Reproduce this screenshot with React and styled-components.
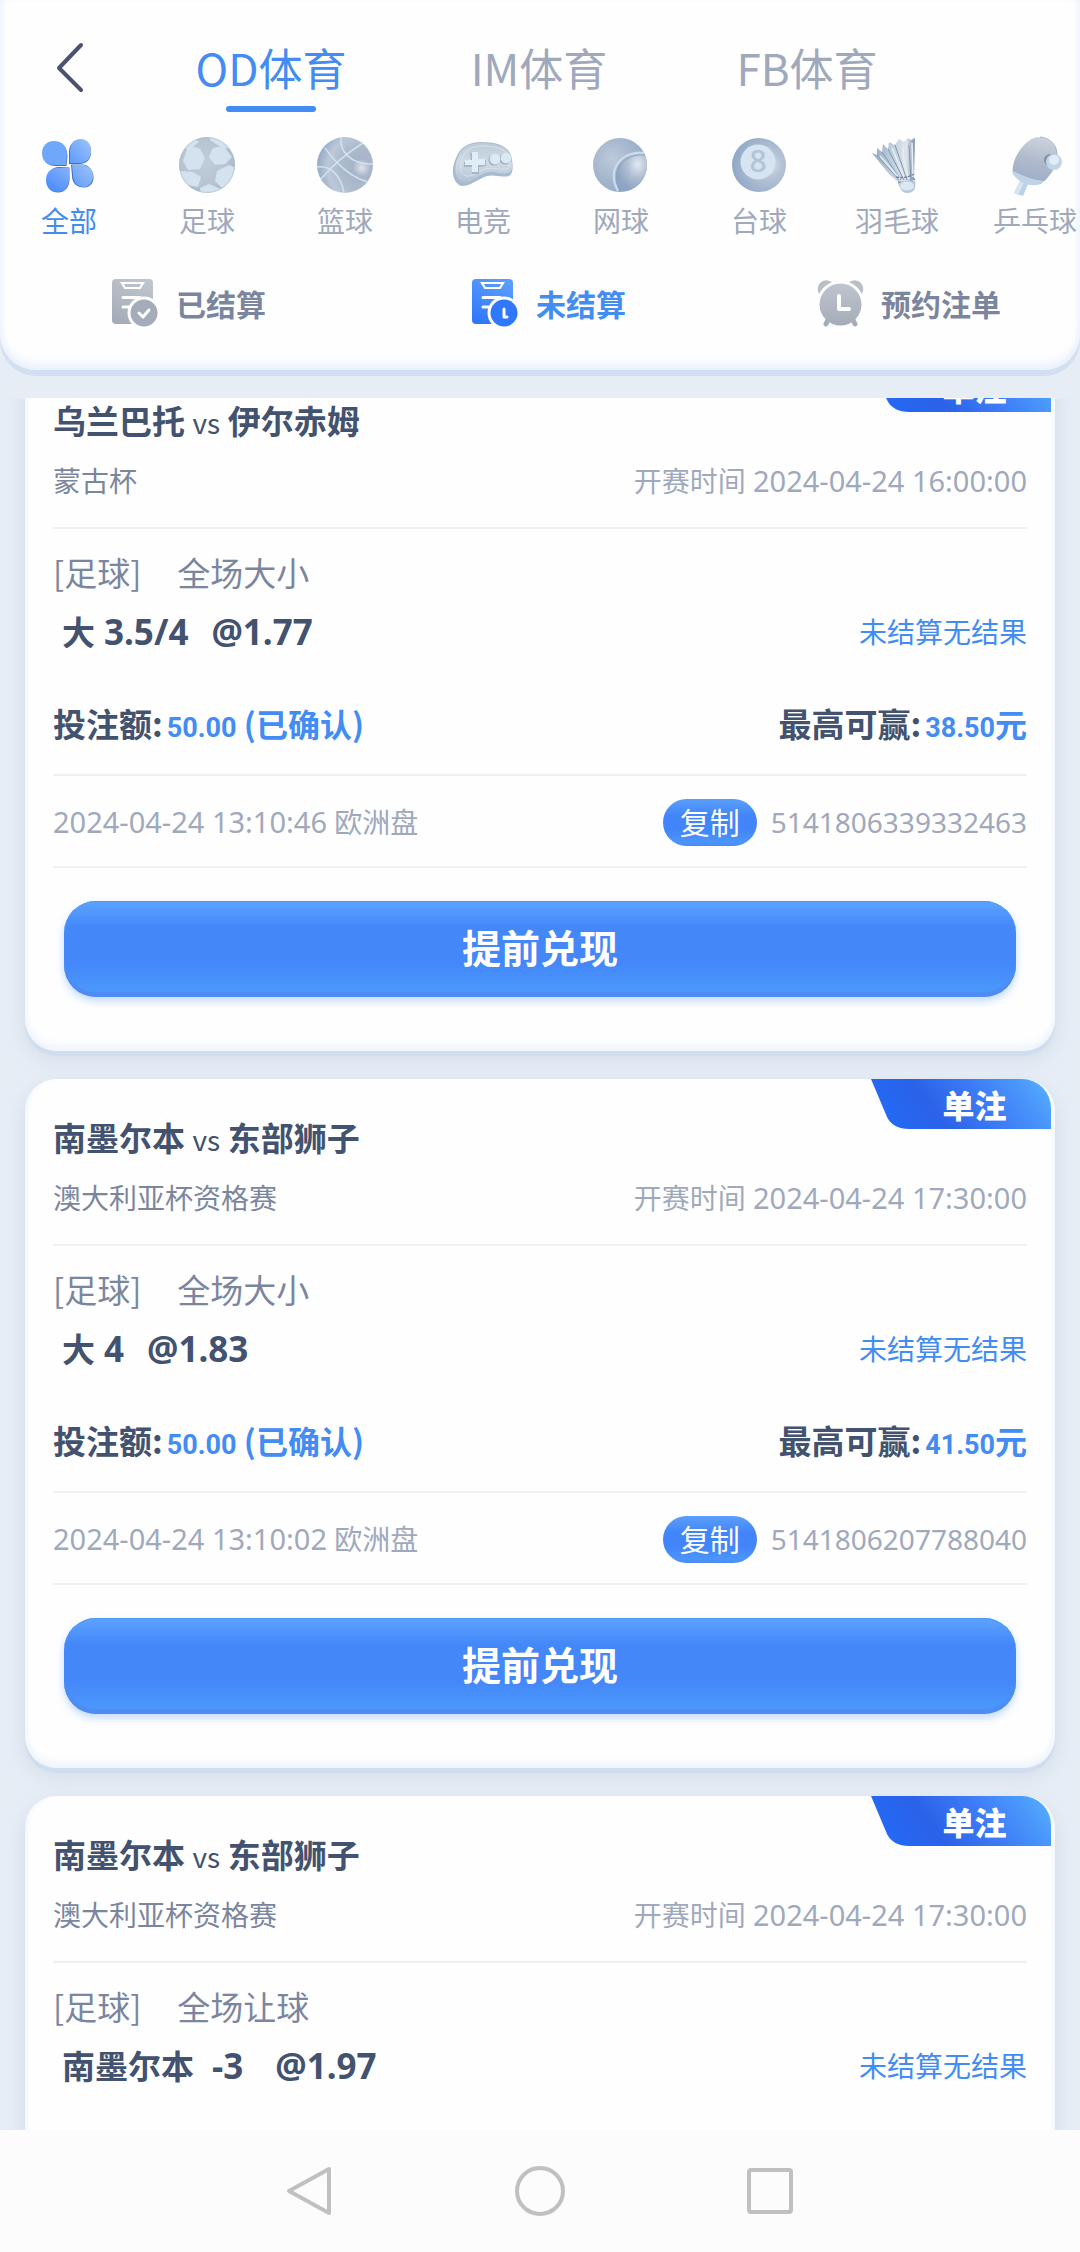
import React, {useState} from 'react';
import styled, {createGlobalStyle, css} from 'styled-components';

const GlobalStyle = createGlobalStyle`
	* {
		box-sizing: border-box;
	}
	body {
		margin: 0;
		background: #e6edf5;
		color: #42526f;
		font-family: "Noto Sans", "Noto Sans CJK SC", sans-serif;
	}
	button {
		border: 0;
		padding: 0;
		background: none;
		color: inherit;
		font: inherit;
		cursor: pointer;
	}
	h2, p {
		margin: 0;
	}
`

const Page = styled.div`
	display: flex;
	flex-direction: column;
	height: 100vh;
`

const Header = styled.header`
	position: relative;
	flex: none;
	padding: 34px 0 43px;
	background: #fefefe;
	border-radius: 0 0 36px 36px;
	box-shadow: 0 6px 0 #d1dff0, inset 0 -10px 14px -6px #e4edfb, inset 5px 0 6px -3px #edf3fc, inset -5px 0 6px -3px #edf3fc;
	font-family: "Noto Sans CJK SC", sans-serif;
`

const TopBar = styled.div`
	display: flex;
	align-items: flex-start;
	padding-right: 139px;
`

const BackButton = styled.button`
	flex: none;
	width: 137px;
	height: 66px;
	padding-left: 53px;
	text-align: left;

	svg {
		display: block;
	}
`

const VenueTabs = styled.nav`
	display: grid;
	flex: 1;
	grid-template-columns: repeat(3, 1fr);
`

const VenueTab = styled.button`
	display: flex;
	flex-direction: column;
	align-items: center;
	gap: 6px;
	color: ${props => props.$active ? '#438cf3' : '#a0a9bb'};
	font-size: 44px;
	line-height: 66px;

	&::after {
		content: '';
		width: 90px;
		height: 6px;
		border-radius: 3px;
		background: ${props => props.$active ? '#438cf3' : 'transparent'};
	}
`

const Sports = styled.nav`
	display: flex;
	margin-top: 21px;
	overflow: hidden;
`

const SportButton = styled.button`
	display: flex;
	flex: 0 0 138px;
	flex-direction: column;
	align-items: center;
	gap: 2px;
	color: ${props => props.$active ? '#438cf3' : '#a0a9bb'};
	font-size: 28px;
	line-height: 42px;
	white-space: nowrap;
`

const StatusTabs = styled.nav`
	display: grid;
	grid-template-columns: repeat(3, 1fr);
	margin-top: 38px;
`

const StatusTab = styled.button`
	display: flex;
	align-items: center;
	justify-content: center;
	gap: 17px;
	height: 48px;
	padding-left: 18px;
	color: ${props => props.$active ? '#438cf3' : '#7b869e'};
	font-size: 30px;
	font-weight: 700;
	line-height: 44px;
`

const BetList = styled.main`
	flex: 1;
	min-height: 0;
	margin-top: 28px;
	padding: 0 25px;
	overflow: hidden;
`

/* the list is scrolled a little way into the first card */
const Scrolled = styled.div`
	display: grid;
	gap: 28px;
	margin-top: -36px;
`

const Card = styled.article`
	position: relative;
	min-height: 688px;
	padding: 35px 28px 54px;
	border-radius: 32px;
	background: #fefefe;
	box-shadow: 0 5px 0 #cfddef, 0 8px 20px rgba(140, 160, 195, 0.22), inset 0 -10px 12px -6px #ebf2fc, inset 6px 0 6px -4px #f0f6fe, inset -6px 0 6px -4px #f0f6fe;
`

const Badge = styled.span`
	position: absolute;
	top: 0;
	right: 4px;
	width: 180px;
	height: 50px;
	padding-left: 27px;
	color: #ffffff;
	font: 700 32px/50px "Noto Sans CJK SC", sans-serif;
	text-align: center;

	svg {
		position: absolute;
		top: 0;
		left: 0;
		z-index: 0;
	}
	b {
		position: relative;
	}
`

const line = css`
	border-bottom: 2px solid #eef0f3;
`

const Teams = styled.h2`
	height: 46px;
	font: 700 33px/46px "Noto Sans CJK SC", sans-serif;

	span {
		font-size: 28px;
		font-weight: 400;
	}
`

const Row = styled.div`
	display: flex;
	align-items: center;
	justify-content: space-between;
`

const MatchRow = styled(Row)`
	${line}
	padding: 18px 0 26px;
	font-size: 28px;
	line-height: 40px;
`

const League = styled.span`
	color: #7b869e;
`

const Muted = styled.span`
	color: #a0a9bb;
`

const Time = styled.time`
	font-size: 29px;
`

const Market = styled.p`
	display: flex;
	gap: 36px;
	margin-top: 20px;
	color: #7b869e;
	font: 400 33px/46px "Noto Sans CJK SC", sans-serif;
`

const Selection = styled(Row)`
	height: 46px;
	margin-top: 14px;
	padding-left: 9px;
`

const Pick = styled.strong`
	display: flex;
	align-items: baseline;
	gap: ${props => props.$wide ? '18px' : '9px'};
	font-size: 33px;
	line-height: 46px;
`

const Figure = styled.span`
	font-size: 35px;

	& + & {
		margin-left: ${props => props.$wide ? '14px' : '26px'};
	}
`

const Result = styled.span`
	color: #438cf3;
	font-size: 28px;
	line-height: 40px;
`

const Amounts = styled(Row)`
	${line}
	height: 74px;
	margin-top: 47px;
	padding-bottom: 26px;
	font: 700 33px/46px "Noto Sans CJK SC", sans-serif;
`

const Money = styled.span`
	margin-left: 4px;
	color: #438cf3;
	font-size: 32px;
`

const Digits = styled.span`
	font-family: Roboto, sans-serif;
	font-size: 27px;
`

const OrderRow = styled(Row)`
	${line}
	padding: 22px 0 20px;
	color: #a0a9bb;
	font-size: 28px;
	line-height: 47px;
`

const OrderNumber = styled.span`
	display: flex;
	align-items: center;
	gap: 14px;
`

const CopyButton = styled.button`
	width: 94px;
	height: 47px;
	border-radius: 24px;
	background: linear-gradient(#5b9ffb, #4285fa 35%, #4285fa 65%, #4b95fb 92%, #4b8af2);
	color: #ffffff;
	font-size: 30px;
	line-height: 47px;
`

const CashOutButton = styled.button`
	display: block;
	width: calc(100% - 22px);
	height: 96px;
	margin: 33px 11px 0;
	padding-bottom: 6px;
	border-radius: 32px;
	background: linear-gradient(#5ca3fe, #4487f9 28%, #4487f9 65%, #4b9afc 96%);
	box-shadow: inset 0 -5px 1px #4e8cf4, inset 0 1px 0 #509bf0, 0 4px 9px rgba(80, 150, 255, 0.35);
	color: #ffffff;
	font: 700 39px/60px "Noto Sans CJK SC", sans-serif;
`

const SystemNav = styled.nav`
	position: relative;
	display: flex;
	flex: none;
	align-items: center;
	justify-content: center;
	gap: 178px;
	height: 122px;
	background: #fcfcfc;

	button {
		height: 52px;
	}
`

const AllIcon = () => (
    <svg width="64" height="64" viewBox="0 0 64 64" aria-hidden="true">
        <defs>
            <linearGradient id="petal" x1="1" y1="0" x2="0" y2="1">
                <stop offset="0" stopColor="#9fc3fa"/>
                <stop offset="1" stopColor="#5e9bfb"/>
            </linearGradient>
            <linearGradient id="petalLow" x1="1" y1="0" x2="0.3" y2="1">
                <stop offset="0" stopColor="#86b1f8"/>
                <stop offset="1" stopColor="#4a8dfd"/>
            </linearGradient>
        </defs>
        <g fill="#3f6fc0">
            <path d="M17 9C9 9 6 15 6 21C6 29 11 33 19 33H29.500L30.500 23C30 14 26 9 17 9Z"/>
            <path d="M44 7C36 7 32 12 32 19V31H42C50 31 54 26 54 19C54 12 51 7 44 7Z"/>
            <path d="M32.500 34.500V46C32.500 54 28 59.500 21 59.500C13 59.500 10 54 10 48C10 39 15 34 22 34Z"/>
            <path d="M34 31.500H45C52 31.500 56.500 38 56.500 44C56.500 50 53 54.500 47 54.500C40 54.500 35 50 35 43Z"/>
        </g>
        <path fill="#6fa7fb" d="M17 8C9 8 5 14 5 20C5 28 10 32 18 32H29L30 22C30 13 25 8 17 8Z"/>
        <path fill="url(#petal)" d="M44 6C36 6 33 12 33 18V30H42C50 30 54 25 54 18C54 11 50 6 44 6Z"/>
        <path fill="url(#petalLow)" d="M32 35V46C32 54 27 59 21 59C13 59 9 54 9 47C9 39 14 35 21 35Z"/>
        <path fill="url(#petal)" d="M35 32H45C52 32 56 37 56 43C56 49 52 54 47 54C40 54 36 49 36 42Z"/>
    </svg>
);

const FootballIcon = () => (
    <svg width="64" height="64" viewBox="0 0 64 64" aria-hidden="true">
        <defs>
            <radialGradient id="football" cx="0.45" cy="0.45" r="0.6">
                <stop offset="0" stopColor="#c2ccd9"/>
                <stop offset="0.7" stopColor="#b7c3d1"/>
                <stop offset="1" stopColor="#a3b7cb"/>
            </radialGradient>
        </defs>
        <clipPath id="footballClip"><circle cx="32" cy="32" r="28"/></clipPath>
        <circle cx="32" cy="32" r="28" fill="url(#football)"/>
        <g clipPath="url(#footballClip)" fill="#d3e2ee">
            <path d="M12 16Q18 12 25 16L30 25L25 36L13 37L8 28Z"/>
            <path d="M37 16Q44 12 50 15L57 24L50 31L40 32L34 24Z"/>
            <path d="M42 38L54 32L61 35L56 49L47 55L40 48Z"/>
            <path d="M25 55L34 51L46 56L42 61L26 61Z"/>
            <path d="M5 38L18 39L26 44L23 54L12 52L5 44Z"/>
            <path d="M9 15L20 6L24 9L14 17Z"/>
            <path d="M34 4L46 7L55 16L46 14L36 8Z"/>
        </g>
        <circle cx="32" cy="32" r="27.400" fill="none" stroke="#a7bdcd" strokeOpacity="0.5"/>
    </svg>
);

const BasketballIcon = () => (
    <svg width="64" height="64" viewBox="0 0 64 64" aria-hidden="true">
        <defs>
            <radialGradient id="basketball" cx="0.8" cy="0.55" r="0.8">
                <stop offset="0" stopColor="#dfe5ee"/>
                <stop offset="0.2" stopColor="#a7b4c9"/>
                <stop offset="0.5" stopColor="#aebbcd"/>
                <stop offset="0.75" stopColor="#bcc8d8"/>
                <stop offset="1" stopColor="#96abc6"/>
            </radialGradient>
        </defs>
        <circle cx="32" cy="32" r="28" fill="url(#basketball)"/>
        <g fill="none" stroke="#cfe2f1" strokeWidth="1.500">
            <path d="M12 15C22 29 37 44 55 49"/>
            <path d="M50 10C34 20 18 34 8 46"/>
            <path d="M28 4C26 18 38 32 60 31"/>
            <path d="M4 34C18 32 28 43 31 60"/>
        </g>
    </svg>
);

const GamepadIcon = () => (
    <svg width="64" height="64" viewBox="0 0 64 64" aria-hidden="true">
        <defs>
            <linearGradient id="pad" x1="0" y1="0" x2="0" y2="1">
                <stop offset="0" stopColor="#bccbd8"/>
                <stop offset="0.5" stopColor="#d0dae5"/>
                <stop offset="1" stopColor="#b2c3d5"/>
            </linearGradient>
        </defs>
        <path fill="#a9bbcf" d="M5 25C9 14 18 9 30 9C44 9 56 12 60 22C62 30 63 41 58 43C51 45 43 41 36 43C27 46 18 54 10 53C2 50 -1 38 5 25Z"/>
        <path fill="url(#pad)" d="M7 24C11 14 19 10 30 10C44 10 56 13 59 22C61 30 63 38 57 40C49 42 43 37 34 40C26 43 21 49 13 49C4 46 2 35 7 24Z"/>
        <path fill="none" stroke="#dbe3eb" d="M11 26C14 17 21 13 31 13C43 13 54 15 57 23C59 29 60 35 55 36C48 37 42 34 34 36C26 39 22 44 15 43C9 40 8 34 11 26Z"/>
        <path fill="#a7b5c6" d="M19 20H26V27H35V33L28 34V41H21V34H13V29H20Z"/>
        <path fill="#e1edf4" d="M21 19H27V26H34V32H27V39H21V32H14V27H21Z"/>
        <circle cx="43" cy="27" r="5.600" fill="#a4b1c1"/>
        <circle cx="54" cy="26" r="5.600" fill="#a4b1c1"/>
        <circle cx="44" cy="26" r="5.400" fill="#dae9f2"/>
        <circle cx="55" cy="25" r="5.200" fill="#dae9f2"/>
    </svg>
);

const TennisIcon = () => (
    <svg width="64" height="64" viewBox="0 0 64 64" aria-hidden="true">
        <defs>
            <radialGradient id="tennis" cx="0.35" cy="0.38" r="0.7">
                <stop offset="0" stopColor="#bcc9da"/>
                <stop offset="0.6" stopColor="#a3b5cd"/>
                <stop offset="1" stopColor="#93abc8"/>
            </radialGradient>
            <radialGradient id="tennisFace" cx="0.7" cy="0.3" r="0.7">
                <stop offset="0" stopColor="#e2e9f2"/>
                <stop offset="0.5" stopColor="#afbdd1"/>
                <stop offset="1" stopColor="#8da4c3"/>
            </radialGradient>
        </defs>
        <circle cx="31" cy="32" r="27" fill="url(#tennis)"/>
        <path fill="url(#tennisFace)" d="M55 20C36 18 20 33 30 58C46 60 58 47 58 32Q58 26 55 20Z"/>
        <path fill="none" stroke="#8fa3bc" strokeWidth="1" d="M56 22C38 20 20 34 31 59"/>
        <path fill="none" stroke="#c8dced" strokeWidth="2.200" d="M55 20C36 17 16 34 29 58"/>
    </svg>
);

const BilliardIcon = () => (
    <svg width="64" height="64" viewBox="0 0 64 64" aria-hidden="true">
        <defs>
            <radialGradient id="billiard" cx="0.68" cy="0.5" r="0.68">
                <stop offset="0" stopColor="#dde5ee"/>
                <stop offset="0.35" stopColor="#b6c3d6"/>
                <stop offset="0.8" stopColor="#9bb0ca"/>
                <stop offset="1" stopColor="#8fa8c6"/>
            </radialGradient>
        </defs>
        <circle cx="32" cy="32" r="27" fill="url(#billiard)"/>
        <circle cx="31" cy="29" r="17.500" fill="#d5e4f0"/>
        <text x="31" y="39" fill="#b3c3d8" fontFamily="Noto Sans" fontSize="30" fontWeight="500" textAnchor="middle">8</text>
    </svg>
);

const ShuttleIcon = () => (
    <svg width="64" height="64" viewBox="0 0 64 64" aria-hidden="true">
        <defs>
            <linearGradient id="feather" x1="0" y1="0" x2="1" y2="0">
                <stop offset="0" stopColor="#94a6bd"/>
                <stop offset="0.45" stopColor="#bccddd"/>
                <stop offset="0.8" stopColor="#dfe4ea"/>
                <stop offset="1" stopColor="#7f93ab"/>
            </linearGradient>
        </defs>
        <path fill="url(#feather)" d="M7 20L12 22L12 15L17 19L18 11L23 16L24 9L30 12L34 6L39 9L43 5L46 7L50 5L49 47L33 49L24 41Z"/>
        <path fill="none" stroke="#8397b0" d="M12 22L34 47M17 19L36 47M23 16L39 47M30 12L42 47M44 12L46 47"/>
        <path fill="none" stroke="#e4edf4" strokeWidth="1.600" d="M15 23L35 46M27 15L40 46M38 12Q37 27 44 46M47 10L48 44"/>
        <path fill="none" stroke="#71869f" strokeWidth="1.400" strokeDasharray="3 1" d="M31 44Q41 46 49 41M33 49Q42 50 50 46"/>
        <path fill="#b1c7da" d="M33 50Q42 46 50 48Q52 60 42 60Q36 60 33 50Z"/>
        <ellipse cx="42" cy="53" rx="7" ry="4.500" fill="#dce8f1"/>
    </svg>
);

const PaddleIcon = () => (
    <svg width="64" height="64" viewBox="0 0 64 64" aria-hidden="true">
        <defs>
            <linearGradient id="blade" x1="0.6" y1="0" x2="0.4" y2="1">
                <stop offset="0" stopColor="#cbd3dc"/>
                <stop offset="0.5" stopColor="#afbacb"/>
                <stop offset="1" stopColor="#9aacc6"/>
            </linearGradient>
        </defs>
        <path fill="#b9d3e6" d="M17 48L25 51L20 63L11 60Z"/>
        <path fill="#d4e6f2" d="M17 48L21 50L15 62L11 60Z"/>
        <path fill="url(#blade)" d="M35 4C46 5 55 12 54 24C53 34 47 42 39 50C33 54 18 50 10 41C7 29 20 6 35 4Z"/>
        <path fill="#bfd5e7" d="M10 38C20 43 30 47 41 48C35 54 24 53 18 49C13 45 10 43 10 38Z"/>
        <path fill="none" stroke="#8fa5be" strokeWidth="0.800" d="M37 4C47 5 55 12 54 24C53 34 47 42 41 48"/>
        <circle cx="47" cy="27" r="6" fill="#7f91ab"/>
        <circle cx="51" cy="29" r="8" fill="#c0d5e6"/>
        <circle cx="51" cy="27" r="5" fill="#e0ecf5"/>
    </svg>
);

const SlipIcon = ({id, from, to, children}) => (
    <svg width="47" height="48" viewBox="0 0 47 48" aria-hidden="true">
        <defs>
            <linearGradient id={id} x1="0.7" y1="0" x2="0.3" y2="1">
                <stop offset="0" stopColor={from}/>
                <stop offset="1" stopColor={to}/>
            </linearGradient>
        </defs>
        <rect width="41" height="45" rx="4" fill={`url(#${id})`}/>
        <path fill="none" stroke="#ffffff" strokeWidth="2.200" d="M10 4H31L28 9H13Z"/>
        <path fill="none" stroke="#ffffff" strokeWidth="3" strokeLinecap="round" d="M11 18.500H28M11 28H18"/>
        <circle cx="32" cy="34" r="16.500" fill="#fefefe"/>
        <circle cx="32" cy="34" r="13.500" fill={to}/>
        <path fill="none" stroke="#ffffff" strokeWidth="3" strokeLinecap="round" strokeLinejoin="round" d={children}/>
    </svg>
);

const AlarmIcon = () => (
    <svg width="47" height="48" viewBox="0 0 47 48" aria-hidden="true">
        <defs>
            <linearGradient id="alarm" x1="0" y1="0" x2="0" y2="1">
                <stop offset="0" stopColor="#bfc5ce"/>
                <stop offset="1" stopColor="#a5acb9"/>
            </linearGradient>
        </defs>
        <path fill="#b9bfc9" d="M2 15Q-1 9 3 4Q8 -1 15 3Q6 7 2 15ZM45 15Q48 9 44 4Q39 -1 32 3Q41 7 45 15Z"/>
        <path fill="none" stroke="#a5acb9" strokeWidth="5" strokeLinecap="round" d="M11 41L9 45M36 41L38 45"/>
        <circle cx="23.500" cy="25.500" r="21" fill="url(#alarm)"/>
        <path fill="none" stroke="#fefefe" strokeWidth="4" strokeLinecap="round" strokeLinejoin="round" d="M22 17V30H32"/>
    </svg>
);

const BadgeShape = ({id}) => (
    <svg width="180" height="50" viewBox="0 0 180 50" aria-hidden="true">
        <defs>
            <linearGradient id={id} x1="0" y1="0.2" x2="1" y2="0">
                <stop offset="0" stopColor="#2468f3"/>
                <stop offset="0.25" stopColor="#2b62e8"/>
                <stop offset="0.55" stopColor="#3d7bf6"/>
                <stop offset="0.8" stopColor="#4a97fb"/>
                <stop offset="1" stopColor="#57b3ff"/>
            </linearGradient>
        </defs>
        <path fill={`url(#${id})`} d="M0 0H151A29 29 0 0 1 180 29V50H38Q22 50 16 38Z"/>
    </svg>
);

const venues = ['OD体育', 'IM体育', 'FB体育'];

const sports = [
    {name: '全部', Icon: AllIcon},
    {name: '足球', Icon: FootballIcon},
    {name: '篮球', Icon: BasketballIcon},
    {name: '电竞', Icon: GamepadIcon},
    {name: '网球', Icon: TennisIcon},
    {name: '台球', Icon: BilliardIcon},
    {name: '羽毛球', Icon: ShuttleIcon},
    {name: '乒乓球', Icon: PaddleIcon},
];

const statuses = [
    {name: '已结算', icon: <SlipIcon id="settled" from="#bfc5ce" to="#a5acb9">M27 34L31 38L37 31</SlipIcon>},
    {name: '未结算', icon: <SlipIcon id="unsettled" from="#5b9dfd" to="#2f78fb">M32 30V38H35</SlipIcon>},
    {name: '预约注单', icon: <AlarmIcon/>},
];

const bets = [
    {
        home: '乌兰巴托', away: '伊尔赤姆', league: '蒙古杯', start: '2024-04-24 16:00:00',
        market: '全场大小', pick: '大', handicap: '3.5/4', odds: '@1.77',
        stake: '50.00', win: '38.50', placed: '2024-04-24 13:10:46', order: '5141806339332463',
    },
    {
        home: '南墨尔本', away: '东部狮子', league: '澳大利亚杯资格赛', start: '2024-04-24 17:30:00',
        market: '全场大小', pick: '大', handicap: '4', odds: '@1.83',
        stake: '50.00', win: '41.50', placed: '2024-04-24 13:10:02', order: '5141806207788040',
    },
    {
        home: '南墨尔本', away: '东部狮子', league: '澳大利亚杯资格赛', start: '2024-04-24 17:30:00',
        market: '全场让球', pick: '南墨尔本', handicap: '-3', odds: '@1.97',
    },
];

const OrderDetails = ({bet}) => (
    <>
        <Amounts>
            <span>投注额:<Money><Digits>{bet.stake}</Digits> (已确认)</Money></span>
            <span>最高可赢:<Money><Digits>{bet.win}</Digits>元</Money></span>
        </Amounts>
        <OrderRow>
            <span><Time>{bet.placed}</Time> 欧洲盘</span>
            <OrderNumber>
                <CopyButton type="button">复制</CopyButton>
                {bet.order}
            </OrderNumber>
        </OrderRow>
        <CashOutButton type="button">提前兑现</CashOutButton>
    </>
);

const BetCard = ({bet, index}) => {
    const wide = bet.pick.length > 1;

    return (
        <Card>
            <Badge>
                <BadgeShape id={`badge${index}`}/>
                <b>单注</b>
            </Badge>
            <Teams>{bet.home} <span>vs</span> {bet.away}</Teams>
            <MatchRow>
                <League>{bet.league}</League>
                <Muted>开赛时间 <Time>{bet.start}</Time></Muted>
            </MatchRow>
            <Market>
                <span>[足球]</span>
                <span>{bet.market}</span>
            </Market>
            <Selection>
                <Pick $wide={wide}>
                    <span>{bet.pick}</span>
                    <Figure $wide={wide}>{bet.handicap}</Figure>
                    <Figure $wide={wide}>{bet.odds}</Figure>
                </Pick>
                <Result>未结算无结果</Result>
            </Selection>
            {bet.order && <OrderDetails bet={bet}/>}
        </Card>
    );
};

const App = () => {
    const [venue, setVenue] = useState('OD体育');
    const [sport, setSport] = useState('全部');
    const [status, setStatus] = useState('未结算');

    return (
        <Page>
            <GlobalStyle/>
            <Header>
                <TopBar>
                    <BackButton type="button" aria-label="返回">
                        <svg width="34" height="64" viewBox="0 0 34 64" fill="none" stroke="#4a5171" strokeWidth="4" strokeLinecap="round" strokeLinejoin="round">
                            <path d="M28 10L6 33L28 55"/>
                        </svg>
                    </BackButton>
                    <VenueTabs>
                        {venues.map(name => (
                            <VenueTab key={name} type="button" $active={name === venue} onClick={() => setVenue(name)}>
                                {name}
                            </VenueTab>
                        ))}
                    </VenueTabs>
                </TopBar>
                <Sports>
                    {sports.map(({name, Icon}) => (
                        <SportButton key={name} type="button" $active={name === sport} onClick={() => setSport(name)}>
                            <Icon/>
                            {name}
                        </SportButton>
                    ))}
                </Sports>
                <StatusTabs>
                    {statuses.map(({name, icon}) => (
                        <StatusTab key={name} type="button" $active={name === status} onClick={() => setStatus(name)}>
                            {icon}
                            {name}
                        </StatusTab>
                    ))}
                </StatusTabs>
            </Header>
            <BetList>
                <Scrolled>
                    {bets.map((bet, index) => <BetCard key={index} bet={bet} index={index}/>)}
                </Scrolled>
            </BetList>
            <SystemNav>
                <button type="button" aria-label="后退">
                    <svg width="52" height="52" viewBox="0 0 52 52" fill="none" stroke="#c0c0c0" strokeWidth="4" strokeLinejoin="round">
                        <path d="M45 4V48L5 26Z"/>
                    </svg>
                </button>
                <button type="button" aria-label="主页">
                    <svg width="52" height="52" viewBox="0 0 52 52" fill="none" stroke="#c0c0c0" strokeWidth="4">
                        <circle cx="26" cy="26" r="23"/>
                    </svg>
                </button>
                <button type="button" aria-label="最近任务">
                    <svg width="52" height="52" viewBox="0 0 52 52" fill="none" stroke="#c0c0c0" strokeWidth="4">
                        <rect x="5" y="5" width="42" height="42" rx="2"/>
                    </svg>
                </button>
            </SystemNav>
        </Page>
    );
};

export default App;
